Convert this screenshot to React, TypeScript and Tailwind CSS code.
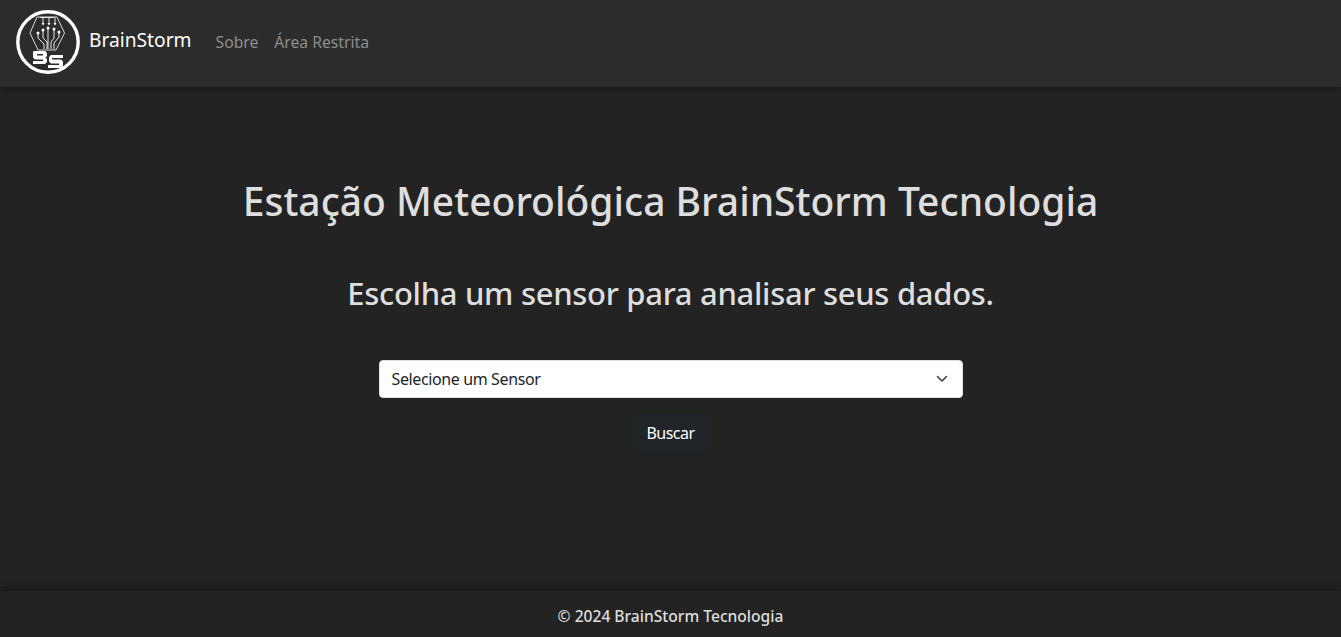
const font = { fontFamily: '"Noto Sans", sans-serif' };

function Logo() {
  return (
    <svg width="64" height="64" viewBox="0 0 64 64" fill="none" className="mb-[4px] shrink-0">
      <circle cx="32" cy="32" r="30.2" stroke="#fff" strokeWidth="3.4" />
      <path d="M21 7h20l7.500 16L40 40H22L14 23z" stroke="#d8d8d8" strokeWidth="1" strokeLinejoin="round" />
      <g stroke="#e8e8e8" strokeWidth="1">
        <path d="M24 7.500h14M27 7.500v7M33 7.500v7M39 7.500v7" />
        <path d="M22 23v5l6 6v5M27 20v8l4 4v7M32 18v21M38 19v9l-3 4v7M43 22v5l-5 6v6" />
      </g>
      <g fill="#fff">
        <path d="M25.500 13h3l-1.500 2.500zM31.500 13h3l-1.500 2.500zM37.500 13h3l-1.500 2.500z" />
        <circle cx="22" cy="23" r="1.500" />
        <circle cx="27" cy="20" r="1.500" />
        <circle cx="32" cy="18" r="1.500" />
        <circle cx="38" cy="19" r="1.500" />
        <circle cx="43" cy="22" r="1.500" />
      </g>
      <path
        d="M19 41h10l2 2v3l-1.500 1.500L31 49v3l-2 2H17v-3h10v-1.500H19l-2-2v-6zM21 44v1.500h6V44z"
        fill="#fff"
        fillRule="evenodd"
      />
      <path d="M35 45h12v3H36v1.500h9l2 2V56l-2 2H32v-3h11v-1.500h-8l-2-2V47z" fill="#fff" />
    </svg>
  );
}

export default function App() {
  return (
    <div className="flex h-[637px] flex-col bg-[#232323]" style={font}>
      <nav className="flex h-[87px] items-center bg-[#2c2c2c] pl-4 shadow-[0_2px_4px_rgba(0,0,0,0.3)]">
        <Logo />
        <a className="mb-[6px] ml-[9px] text-[19.2px] text-white">BrainStorm</a>
        <a className="mb-[1px] ml-[24px] text-[15.7px] text-[#8c8c8c]">Sobre</a>
        <a className="mb-[1px] ml-[16px] text-[15.7px] text-[#8c8c8c]">Área Restrita</a>
      </nav>

      <main className="flex flex-1 flex-col items-center">
        <h1 className="mt-[90px] text-[39px] leading-[48px] font-medium text-[#dedede]">
          Estação Meteorológica BrainStorm Tecnologia
        </h1>
        <h2 className="mt-[49px] mb-[1px] text-[31px] leading-[38px] font-medium tracking-[-0.3px] text-[#dedede]">
          Escolha um sensor para analisar seus dados.
        </h2>
        <div className="mt-[47px] flex h-[38px] w-[584px] items-center justify-between rounded-[4px] border border-[#dee2e6] bg-white pr-[14px] pl-[12px] text-[#212529]">
          <span className="text-[16px] tracking-[-0.38px]">Selecione um Sensor</span>
          <svg width="12" height="12" viewBox="0 0 12 12" fill="none" stroke="#343a40" strokeWidth="1.5" strokeLinecap="round" strokeLinejoin="round">
            <path d="M1.500 3.500 6 8l4.500-4.500" />
          </svg>
        </div>
        <button className="mt-[16px] h-[38px] rounded-[4px] bg-[#212529] px-[13px] text-[16px] tracking-[-0.5px] text-white">
          Buscar
        </button>
      </main>

      <footer className="flex h-[46px] items-center justify-center bg-[#232323] pt-[5px] text-[15.6px] font-medium text-[#dedede] shadow-[0_-3px_6px_rgba(0,0,0,0.3)]">
        © 2024 BrainStorm Tecnologia
      </footer>
    </div>
  );
}
